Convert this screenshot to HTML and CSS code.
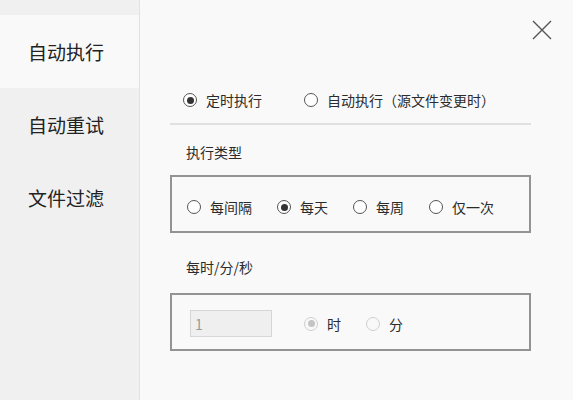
FILE: index.html
```html
<!DOCTYPE html>
<html lang="zh-CN">

<head>
    <meta charset="UTF-8" />
    <meta name="viewport" content="width=device-width, initial-scale=1.0" />
    <title>自动执行设置</title>
    <link rel="stylesheet" href="styles.css">
</head>

<body>
    <div class="sidebar">
        <div class="nav-item active">自动执行</div>
        <div class="nav-item">自动重试</div>
        <div class="nav-item">文件过滤</div>
    </div>

    <div class="main">
        <div class="header">
            <button class="close" aria-label="关闭">
                <svg width="20" height="20" viewBox="0 0 20 20">
                    <path d="M1 1 L19 19 M19 1 L1 19" stroke="#555" stroke-width="1.4" fill="none" />
                </svg>
            </button>
        </div>

        <div class="content">
            <div class="mode-row">
                <label class="radio"><input type="radio" name="mode" checked /> 定时执行</label>
                <label class="radio"><input type="radio" name="mode" /> 自动执行（源文件变更时）</label>
            </div>

            <div class="divider"></div>

            <p class="label">执行类型</p>
            <div class="box type-box">
                <label class="radio"><input type="radio" name="type" /> 每间隔</label>
                <label class="radio"><input type="radio" name="type" checked /> 每天</label>
                <label class="radio"><input type="radio" name="type" /> 每周</label>
                <label class="radio"><input type="radio" name="type" /> 仅一次</label>
            </div>

            <p class="label label-time">每时/分/秒</p>
            <div class="box time-box">
                <input type="text" class="num" value="1" disabled />
                <label class="radio"><input type="radio" name="unit" checked disabled /> 时</label>
                <label class="radio"><input type="radio" name="unit" disabled /> 分</label>
            </div>
        </div>
    </div>
</body>

</html>
```

FILE: styles.css
```css
body {
    margin: 0;
    height: 400px;
    display: flex;
    font-family: "Noto Sans CJK SC", "Noto Sans", sans-serif;
    color: #2b2b2b;
    background-color: #f9f9f9;
    overflow: hidden;
}

.sidebar {
    width: 140px;
    background-color: #f0f0f0;
    border-right: 1px solid #e2e2e2;
    padding-top: 15px;
    box-sizing: border-box;
    flex-shrink: 0;
}

.nav-item {
    height: 73px;
    display: flex;
    align-items: center;
    padding-left: 28px;
    font-size: 19px;
    color: #222;
}

.nav-item.active {
    background-color: #f9f9f9;
}

.main {
    flex: 1;
    padding: 0 21px 0 30px;
}

.header {
    display: flex;
    justify-content: flex-end;
    padding-top: 20px;
}

.close {
    border: 0;
    background: transparent;
    padding: 0;
    width: 20px;
    height: 20px;
    cursor: pointer;
}

.close svg {
    display: block;
}

.content {
    margin-right: 21px;
}

.radio {
    display: flex;
    align-items: center;
    gap: 9px;
    font-size: 14px;
    line-height: 20px;
}

.radio input {
    -webkit-appearance: none;
    appearance: none;
    margin: 0;
    width: 14px;
    height: 14px;
    border: 1px solid #555;
    border-radius: 50%;
    background-color: #fff;
    box-sizing: border-box;
    position: relative;
}

.radio input:checked::after {
    content: "";
    position: absolute;
    top: 2.5px;
    left: 2.5px;
    width: 7px;
    height: 7px;
    border-radius: 50%;
    background-color: #333;
}

.radio input:disabled {
    border-color: #cfcfcf;
    background-color: #f9f9f9;
}

.radio input:disabled:checked::after {
    background-color: #c4c4c4;
}

.mode-row {
    display: flex;
    gap: 42px;
    margin-top: 50px;
    padding-left: 13px;
}

.divider {
    height: 2px;
    background-color: #e0e0e0;
    margin-top: 13px;
}

.label {
    margin: 17px 0 0 16px;
    font-size: 14px;
    line-height: 20px;
}

.label-time {
    margin-top: 24px;
}

.box {
    border: 2px solid #939393;
    display: flex;
    align-items: center;
    margin-top: 13px;
    height: 58px;
    box-sizing: border-box;
}

.type-box {
    gap: 25px;
    padding: 6px 15px 0 15px;
}

.time-box {
    margin-top: 16px;
    padding: 3px 18px 0 18px;
    gap: 25px;
}

.num {
    width: 82px;
    height: 27px;
    box-sizing: border-box;
    border: 1px solid #d6d6d6;
    background-color: #efefef;
    color: #999;
    font-family: "Noto Sans CJK SC", "Noto Sans", sans-serif;
    font-size: 14px;
    padding: 0 4px;
    margin-right: 7px;
}
```
